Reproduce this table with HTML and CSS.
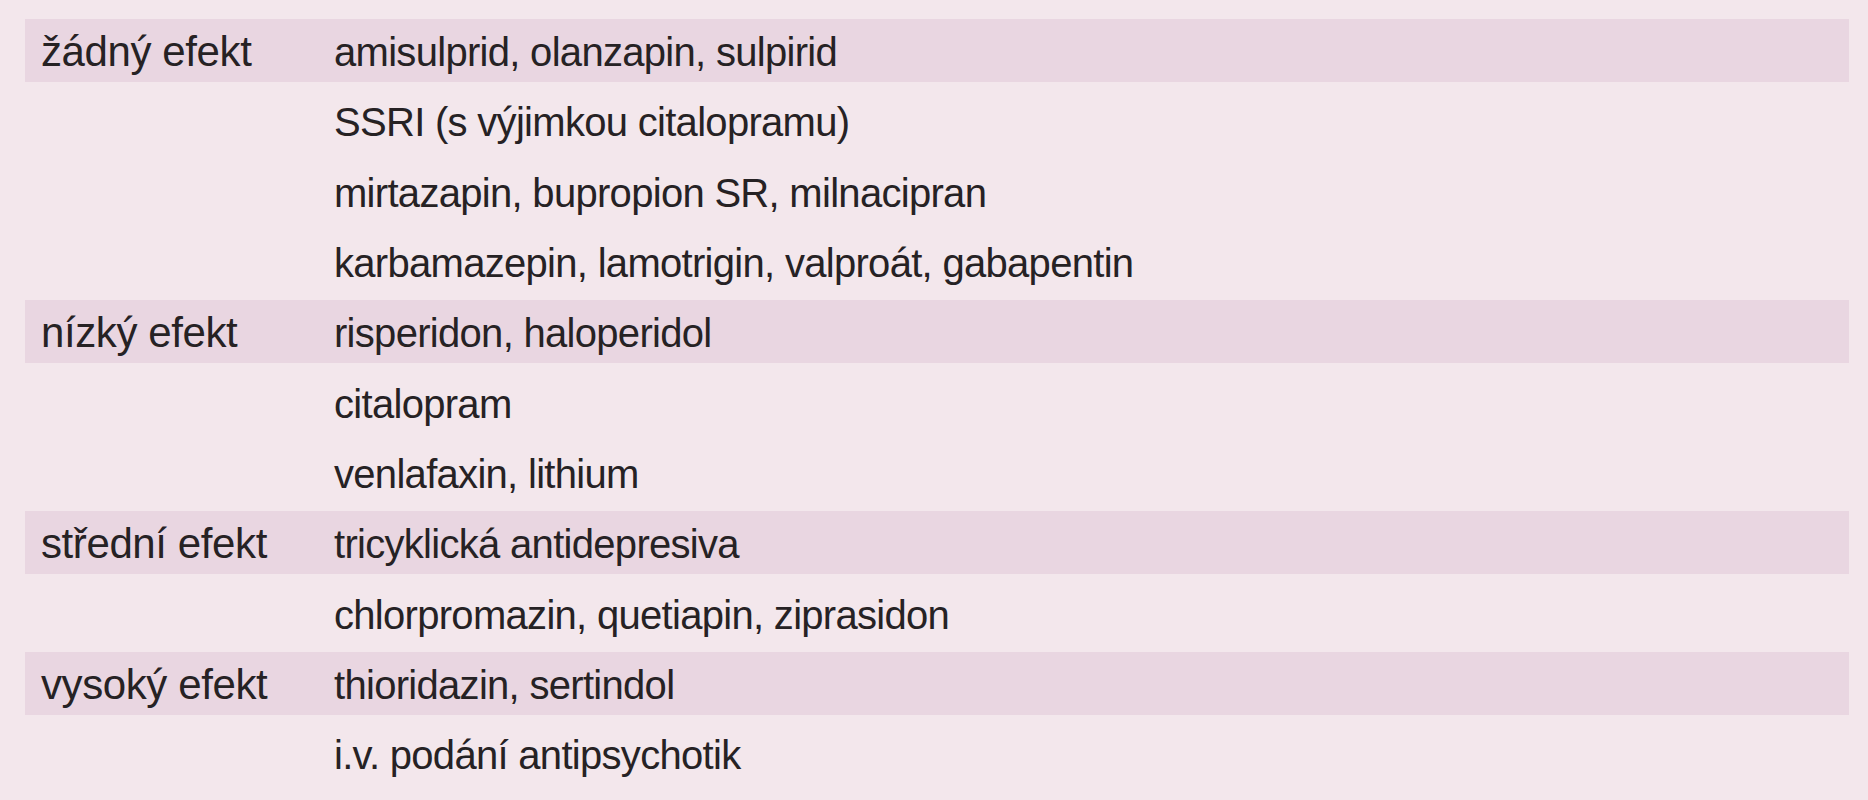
FILE: index.html
```html
<!DOCTYPE html>
<html lang="cs">
<head>
<meta charset="utf-8">
<title>Efekt</title>
<link rel="stylesheet" href="styles.css">
</head>
<body>
<div class="table">
  <div class="row hl"><div class="cat">žádný efekt</div><div class="val">amisulprid, olanzapin, sulpirid</div></div>
  <div class="row"><div class="cat"></div><div class="val">SSRI (s výjimkou citalopramu)</div></div>
  <div class="row"><div class="cat"></div><div class="val">mirtazapin, bupropion SR, milnacipran</div></div>
  <div class="row"><div class="cat"></div><div class="val">karbamazepin, lamotrigin, valproát, gabapentin</div></div>
  <div class="row hl"><div class="cat">nízký efekt</div><div class="val">risperidon, haloperidol</div></div>
  <div class="row"><div class="cat"></div><div class="val">citalopram</div></div>
  <div class="row"><div class="cat"></div><div class="val">venlafaxin, lithium</div></div>
  <div class="row hl"><div class="cat">střední efekt</div><div class="val">tricyklická antidepresiva</div></div>
  <div class="row"><div class="cat"></div><div class="val">chlorpromazin, quetiapin, ziprasidon</div></div>
  <div class="row hl"><div class="cat">vysoký efekt</div><div class="val">thioridazin, sertindol</div></div>
  <div class="row"><div class="cat"></div><div class="val">i.v. podání antipsychotik</div></div>
</div>
</body>
</html>
```
FILE: styles.css
```css
html, body {
  margin: 0;
  padding: 0;
  background: #f3e7ec;
}
body {
  width: 1868px;
  height: 800px;
  overflow: hidden;
  font-family: "Liberation Sans", Arial, sans-serif;
  color: #262224;
}
.table {
  display: flex;
  flex-direction: column;
  row-gap: 7.33px;
  padding: 19px 0 0 25px;
  width: 1824px;
}
.row {
  display: grid;
  grid-template-columns: 309px 1fr;
  height: 63px;
  align-items: center;
}
.row.hl {
  background: #e9d6e1;
}
.cat {
  padding-left: 16px;
  font-size: 42px;
  letter-spacing: -0.4px;
  line-height: 63px;
}
.val {
  font-size: 40px;
  letter-spacing: -0.7px;
  line-height: 63px;
  padding-top: 2px;
}
```
